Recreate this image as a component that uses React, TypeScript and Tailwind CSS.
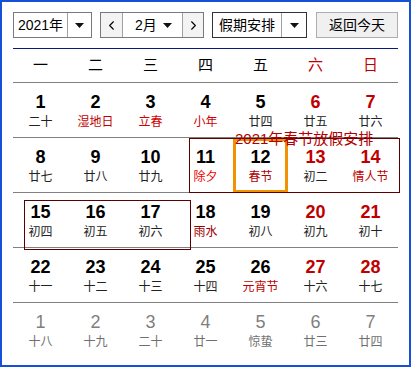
import { ChevronLeft, ChevronRight } from 'lucide-react'

type Day = { d: number; l: string; fest?: string; weekend?: boolean; other?: boolean }

const WEEKDAYS = ['一', '二', '三', '四', '五', '六', '日']

const WEEKS: Day[][] = [
  [
    { d: 1, l: '二十' },
    { d: 2, l: '湿地日', fest: 'text-[#c00000]' },
    { d: 3, l: '立春', fest: 'text-[#d00000]' },
    { d: 4, l: '小年', fest: 'text-[#d00000]' },
    { d: 5, l: '廿四' },
    { d: 6, l: '廿五', weekend: true },
    { d: 7, l: '廿六', weekend: true },
  ],
  [
    { d: 8, l: '廿七' },
    { d: 9, l: '廿八' },
    { d: 10, l: '廿九' },
    { d: 11, l: '除夕', fest: 'text-[#f00000]' },
    { d: 12, l: '春节', fest: 'text-[#b00000]' },
    { d: 13, l: '初二', weekend: true },
    { d: 14, l: '情人节', weekend: true, fest: 'text-[#c00000]' },
  ],
  [
    { d: 15, l: '初四' },
    { d: 16, l: '初五' },
    { d: 17, l: '初六' },
    { d: 18, l: '雨水', fest: 'text-[#a00000]' },
    { d: 19, l: '初八' },
    { d: 20, l: '初九', weekend: true },
    { d: 21, l: '初十', weekend: true },
  ],
  [
    { d: 22, l: '十一' },
    { d: 23, l: '十二' },
    { d: 24, l: '十三' },
    { d: 25, l: '十四' },
    { d: 26, l: '元宵节', fest: 'text-[#c00000]' },
    { d: 27, l: '十六', weekend: true },
    { d: 28, l: '十七', weekend: true },
  ],
  [
    { d: 1, l: '十八', other: true },
    { d: 2, l: '十九', other: true },
    { d: 3, l: '二十', other: true },
    { d: 4, l: '廿一', other: true },
    { d: 5, l: '惊蛰', other: true },
    { d: 6, l: '廿三', other: true },
    { d: 7, l: '廿四', other: true },
  ],
]

function Caret() {
  return (
    <svg width="9" height="5" viewBox="0 0 9 5">
      <path d="M0 0 L9 0 L4.5 5 Z" fill="#111" />
    </svg>
  )
}

function DayCell({ day }: { day: Day }) {
  const numColor = day.other ? 'text-[#7f7f7f] font-normal' : day.weekend ? 'text-[#c00000] font-bold' : 'text-black font-bold'
  const lunarColor = day.other ? 'text-[#6f6f6f]' : day.fest ?? 'text-[#222]'
  return (
    <div className="flex flex-col items-center pt-[8px]">
      <span className={`text-[18px] leading-[22px] ${numColor}`}>{day.d}</span>
      <span className={`text-[12px] leading-[16px] mt-[1px] ${lunarColor}`}>{day.l}</span>
    </div>
  )
}

export default function App() {
  return (
    <div
      className="w-[411px] h-[367px] border-2 border-[#1450d8] bg-white px-[11px] pt-[10px] text-black"
      style={{ fontFamily: '"Liberation Sans", "Noto Sans CJK SC", sans-serif' }}
    >
      {/* Toolbar */}
      <div className="flex items-center h-[26px] text-[14px]">
        <div className="flex h-[26px] w-[79px] border border-[#7a7a7a]">
          <div className="flex-1 flex items-center justify-center">2021年</div>
          <div className="w-[24px] border-l border-[#a0a0a0] flex items-center justify-center"><Caret /></div>
        </div>

        <div className="flex h-[26px] w-[104px] ml-[8px] border border-[#7a7a7a]">
          <div className="w-[22px] bg-[#f3f3f3] flex items-center justify-center border-r border-[#a0a0a0]">
            <ChevronLeft className="w-[15px] h-[15px]" strokeWidth={1.75} />
          </div>
          <div className="flex-1 flex items-center pl-[12px] pr-[10px] justify-between">
            <span>2月</span>
            <Caret />
          </div>
          <div className="w-[21px] bg-[#f3f3f3] flex items-center justify-center border-l border-[#a0a0a0]">
            <ChevronRight className="w-[15px] h-[15px]" strokeWidth={1.75} />
          </div>
        </div>

        <div className="flex h-[26px] w-[95px] ml-[8px] border border-[#333]">
          <div className="flex-1 flex items-center justify-center">假期安排</div>
          <div className="w-[25px] border-l border-[#a0a0a0] flex items-center justify-center"><Caret /></div>
        </div>

        <button className="h-[26px] w-[82px] ml-auto border border-[#adadad] bg-[#f0f0f0] flex items-center justify-center">
          返回今天
        </button>
      </div>

      <div className="h-px bg-[#0a1a7a] mt-[10px]" />

      {/* Weekday header */}
      <div className="grid grid-cols-7 h-[34px] border-b border-[#808080] text-[15px]">
        {WEEKDAYS.map((w, i) => (
          <div key={w} className={`flex items-center justify-center ${i >= 5 ? 'text-[#c00000]' : ''}`}>
            {w}
          </div>
        ))}
      </div>

      {/* Days */}
      <div className="relative">
        {WEEKS.map((week, wi) => (
          <div
            key={wi}
            className={`grid grid-cols-7 h-[55px] ${wi < WEEKS.length - 1 ? 'border-b border-[#808080]' : ''}`}
          >
            {week.map((day, di) => (
              <DayCell key={di} day={day} />
            ))}
          </div>
        ))}

        {/* today */}
        <div className="absolute left-[220px] top-[55px] w-[55px] h-[55px] border-[3px] border-[#f39200]" />

        {/* holiday overlay */}
        <div className="absolute left-[176px] top-[55px] w-[211px] h-[55px] border border-[#5a0000]" />
        <div className="absolute left-[222px] top-[47px] text-[15px] leading-[18px] text-[#b00000] whitespace-nowrap">
          2021年春节放假安排
        </div>
        <div className="absolute left-[11px] top-[117px] w-[167px] h-[50px] border border-[#5a0000]" />
      </div>
    </div>
  )
}
